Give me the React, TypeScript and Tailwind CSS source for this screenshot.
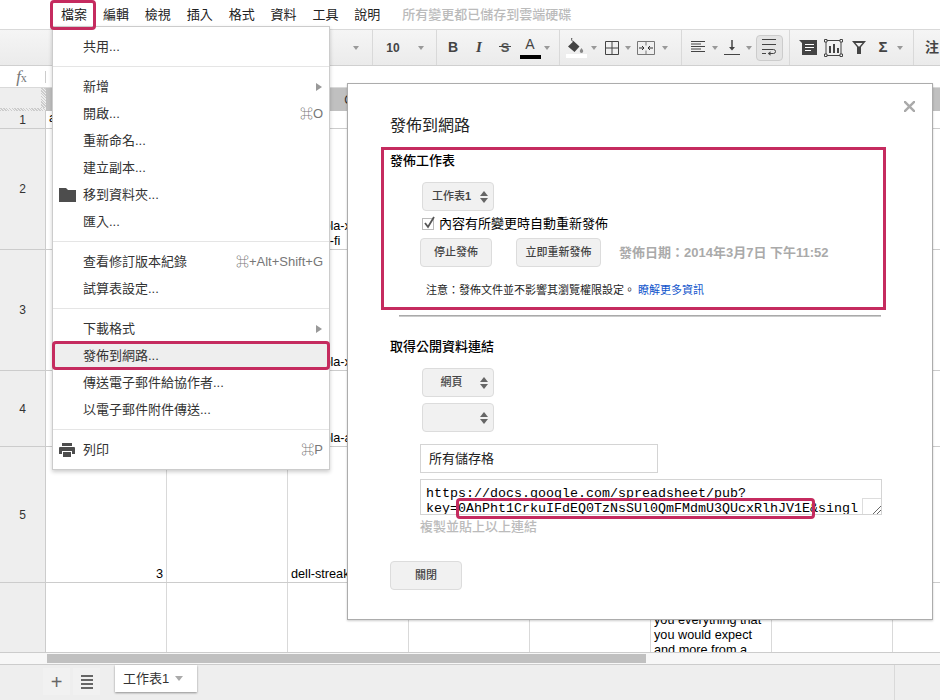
import React from "react";

const MENUS = ["檔案", "編輯", "檢視", "插入", "格式", "資料", "工具", "說明"];

const FileIcon = () => (
  <svg width="18" height="14" viewBox="0 0 18 14"><path d="M0 0h7l2 2h8v12H0z" fill="#4d4d4d" /></svg>
);

const PrintIcon = () => (
  <svg width="16" height="14" viewBox="0 0 16 14" fill="#4d4d4d">
    <path d="M3 0h10v3H3z" />
    <path d="M1 4h14a1 1 0 0 1 1 1v6h-3V8H3v3H0V5a1 1 0 0 1 1-1z" />
    <path d="M4 9h8v5H4z" />
  </svg>
);

const Caret = () => <span className="inline-block border-x-[3.5px] border-t-[4px] border-x-transparent border-t-[#999]" />;

const Tool = ({ w, children }: { w: number; children?: React.ReactNode }) => (
  <div className="flex h-full shrink-0 items-center justify-center" style={{ width: w }}>{children}</div>
);

const Arrow = ({ w = 10 }: { w?: number }) => <Tool w={w}><Caret /></Tool>;

const Group = ({ w, pl, children }: { w: number; pl: number; children: React.ReactNode }) => (
  <div className="flex h-full shrink-0 items-center border-r border-[#d9d9d9]" style={{ width: w, paddingLeft: pl }}>{children}</div>
);

const Toolbar = () => (
  <div className="flex h-[36px] shrink-0 overflow-hidden border-b border-[#d0d0d0] bg-gradient-to-b from-[#f5f5f5] to-[#ebebeb]">
    <div className="flex h-full w-[373px] shrink-0 items-center justify-end border-r border-[#d9d9d9] pr-[13px]"><Caret /></div>
    <Group w={64} pl={0}>
      <span className="w-[40px] text-center text-[12px] font-bold text-[#444]">10</span>
      <span className="ml-[5px] flex"><Caret /></span>
    </Group>
    <Group w={123} pl={3}>
      <Tool w={26}><span className="text-[14px] font-bold text-[#444]">B</span></Tool>
      <Tool w={26}><span className="font-['Liberation_Serif'] text-[15px] font-bold italic text-[#444]">I</span></Tool>
      <Tool w={26}>
        <span className="relative text-[13px] font-bold text-[#555]">
          S
          <span className="absolute -left-[2px] -right-[2px] top-[8px] h-px bg-[#444]" />
        </span>
      </Tool>
      <Tool w={24}>
        <div className="flex flex-col items-center">
          <span className="text-[14px] leading-[16px] text-[#444]">A</span>
          <span className="mt-[3px] h-[4px] w-[21px] bg-black" />
        </div>
      </Tool>
      <Arrow />
    </Group>
    <Group w={122} pl={5}>
      <Tool w={22}>
        <div className="flex flex-col items-center">
          <svg width="18" height="16" viewBox="0 0 18 16" fill="#444">
            <path d="M4 0l1.5.6-.7 1.6L6.500 3 12.500 8.500 7.500 14 1 8.500 6 3.800 4.500 2.800z" />
            <path d="M14.500 10c1 1.500 1.700 2.300 1.700 3.200a1.700 1.700 0 0 1-3.400 0c0-.9.700-1.700 1.700-3.200z" fill="#888" />
          </svg>
          <span className="h-[4px] w-[21px] bg-white" />
        </div>
      </Tool>
      <Arrow w={13} />
      <Tool w={23}>
        <svg width="14" height="14" viewBox="0 0 14 14" fill="none" stroke="#444"><path d="M.5.5h13v13H.5zM7 .5v13M.5 7h13" /></svg>
      </Tool>
      <Arrow />
      <Tool w={26}>
        <svg width="18" height="14" viewBox="0 0 18 14" fill="none" stroke="#777">
          <path d="M.5.5h17v13H.5zM9 .5v4M9 9.5v4" />
          <path d="M2 7h5M5 5l2 2-2 2M16 7h-5M13 5l-2 2 2 2" stroke="#333" />
        </svg>
      </Tool>
      <Arrow w={12} />
    </Group>
    <Group w={108} pl={5}>
      <Tool w={22}>
        <svg width="15" height="13" viewBox="0 0 15 13" stroke="#444"><path d="M0 .5h14M0 3h10M0 5.500h14M0 8h10M0 10.500h14" /></svg>
      </Tool>
      <Arrow w={11} />
      <Tool w={24}>
        <svg width="16" height="15" viewBox="0 0 16 15" fill="#444" stroke="#444"><path d="M8 0v8" strokeWidth="1.5" /><path d="M5 7h6l-3 3.500z" stroke="none" /><path d="M0 14.500h16" /></svg>
      </Tool>
      <Arrow />
      <div className="ml-[2px] flex h-[26px] w-[27px] items-center justify-center rounded-sm border border-[#ccc] bg-[#e4e4e4]">
        <svg width="15" height="17" viewBox="0 0 15 17" fill="none" stroke="#444">
          <path d="M0 .5h14M0 5.500h14M0 10.500h11.500a2 2 0 0 1 0 4H8M0 14.500h4" />
          <path d="M8.500 12.300v4.400L5.800 14.500z" fill="#444" stroke="none" />
        </svg>
      </div>
    </Group>
    <Group w={124} pl={5}>
      <Tool w={25}>
        <svg width="18" height="15" viewBox="0 0 18 15"><path d="M0 0h18v15H3V3z" fill="#444" /><path d="M6 4.500h9M6 7.500h9M6 10.500h6" stroke="#fff" /></svg>
      </Tool>
      <Tool w={26}>
        <svg width="19" height="18" viewBox="0 0 19 18" fill="none" stroke="#444"><path d="M2 1.500h15v15H2z" /><path d="M5 7h2v7H5zM9 5h2v9H9zM13 9h2v5h-2z" fill="#444" stroke="none" /><path d="M.5.5h2.500v2.500H.5zM16 .5h2.500v2.500H16zM.5 15h2.500v2.500H.5zM16 15h2.500v2.500H16z" fill="#fff" /></svg>
      </Tool>
      <Tool w={25}>
        <svg width="14" height="13" viewBox="0 0 14 13" fill="#444"><path d="M0 0h14L9 6v7H5V6zM3.500 2L6.500 5.500h1L10.500 2z" fillRule="evenodd" /></svg>
      </Tool>
      <Tool w={24}><span className="text-[15px] font-bold text-[#444]">Σ</span></Tool>
      <Arrow />
    </Group>
    <div className="flex h-full flex-1 items-center pl-[11px] text-[14px] font-bold text-[#444]">注</div>
  </div>
);

const COL_W = [121, 121, 121, 121, 121, 121, 121, 48];

const Row = ({ h, num, cells = {} }: { h: number; num: string; cells?: Record<number, React.ReactNode> }) => (
  <div className="flex shrink-0 overflow-hidden border-b border-[#ccc]" style={{ height: h }}>
    <div className="flex w-[46px] shrink-0 items-center justify-center border-r border-[#ccc] bg-[#eee] text-[12px] text-[#333]">{num}</div>
    {COL_W.map((w, i) => (
      <div key={i} className="relative shrink-0 overflow-hidden border-r border-[#d9d9d9] text-[12.7px] leading-[15px] text-black" style={{ width: w }}>
        {cells[i]}
      </div>
    ))}
  </div>
);

const Bottom = ({ children }: { children: React.ReactNode }) => (
  <div className="flex h-full flex-col justify-end whitespace-nowrap px-[3px]">{children}</div>
);

const Grid = () => (
  <div className="flex min-h-0 flex-1 flex-col overflow-hidden bg-white">
    <div className="flex h-[23px] shrink-0 bg-[#c0c0c0]">
      <div className="flex w-[46px] shrink-0 flex-col">
        <div className="flex flex-1">
          <div className="flex-1 bg-[#eee]" />
          <div className="w-[5px] bg-[repeating-linear-gradient(45deg,#ccc,#ccc_1px,#eee_1px,#eee_2px)]" />
        </div>
        <div className="h-[3px] bg-[repeating-linear-gradient(45deg,#ccc,#ccc_1px,#eee_1px,#eee_2px)]" />
      </div>
      <div className="w-[242px] shrink-0" />
      <div className="flex w-[121px] shrink-0 items-center justify-center text-[12px] text-[#333]">C</div>
    </div>
    <Row h={18} num="1" cells={{ 0: <div className="px-[3px]">a</div> }} />
    <Row h={121} num="2" cells={{ 2: <Bottom><div>motorola-xoom-</div><div>with-wi-fi</div></Bottom> }} />
    <Row h={121} num="3" cells={{ 2: <Bottom>motorola-xoom</Bottom> }} />
    <Row h={76} num="4" cells={{ 2: <Bottom>motorola-atrix</Bottom> }} />
    <Row h={136} num="5" cells={{ 0: <Bottom><div className="text-right">3</div></Bottom>, 2: <Bottom>dell-streak-7</Bottom> }} />
    <Row h={70} num="" cells={{
      5: (
        <div className="flex h-full flex-col justify-end whitespace-nowrap px-[3px]">
          <div>you everything that</div>
          <div>you would expect</div>
          <div className="-mb-[6px]">and more from a</div>
        </div>
      ),
    }} />
  </div>
);

const Sep = () => <div className="my-[6px] h-px bg-[#e5e5e5]" />;

const Item = ({ label, hint, arrow, icon, active }: { label: string; hint?: string; arrow?: boolean; icon?: React.ReactNode; active?: boolean }) => (
  <div className={`flex h-[27px] items-center pl-[6px] pr-[6px] text-[13px] text-[#333] ${active ? "bg-[#eee]" : ""}`}>
    <div className="flex w-[24px] shrink-0 items-center">{icon}</div>
    <span className="flex-1">{label}</span>
    {hint && <span className="text-[#777]">{hint}</span>}
    {arrow && <span className="mr-[1px] inline-block border-y-[4px] border-l-[6px] border-y-transparent border-l-[#999]" />}
  </div>
);

const FileMenu = () => (
  <div className="absolute left-[52px] top-[26px] w-[278px] border border-[#ccc] bg-white py-[6px] shadow-[0_2px_4px_rgba(0,0,0,0.2)]">
    <Item label="共用..." />
    <Sep />
    <Item label="新增" arrow />
    <Item label="開啟..." hint="⌘O" />
    <Item label="重新命名..." />
    <Item label="建立副本..." />
    <Item label="移到資料夾..." icon={<FileIcon />} />
    <Item label="匯入..." />
    <Sep />
    <Item label="查看修訂版本紀錄" hint="⌘+Alt+Shift+G" />
    <Item label="試算表設定..." />
    <Sep />
    <Item label="下載格式" arrow />
    <Item label="發佈到網路..." active />
    <Item label="傳送電子郵件給協作者..." />
    <Item label="以電子郵件附件傳送..." />
    <Sep />
    <Item label="列印" hint="⌘P" icon={<PrintIcon />} />
  </div>
);

const Select = ({ label, className = "" }: { label?: React.ReactNode; className?: string }) => (
  <div className={`flex h-[29px] w-[72px] items-center justify-between rounded-sm border border-[#dcdcdc] bg-[#f1f1f1] pr-[5px] text-[11px] font-medium text-[#444] ${className}`}>
    <span className="flex-1 text-center">{label}</span>
    <span className="flex flex-col gap-[2px]">
      <span className="border-x-[4px] border-b-[5px] border-x-transparent border-b-[#666]" />
      <span className="border-x-[4px] border-t-[5px] border-x-transparent border-t-[#666]" />
    </span>
  </div>
);

const Button = ({ w, children }: { w: number; children: React.ReactNode }) => (
  <div className="flex h-[29px] items-center justify-center rounded-sm border border-[#dcdcdc] bg-[#f1f1f1] text-[11px] font-medium text-[#444]" style={{ width: w }}>
    {children}
  </div>
);

const Dialog = () => (
  <div className="absolute left-[347px] top-[83px] flex h-[537px] w-[586px] flex-col border border-[#acacac] bg-white pl-[33px] shadow-[0_1px_2px_rgba(0,0,0,0.2)]">
    <svg className="absolute right-[17px] top-[17px]" width="11" height="11" viewBox="0 0 11 11" stroke="#aaa" strokeWidth="2.4"><path d="M0 0l11 11M11 0L0 11" /></svg>
    <h2 className="mt-[32px] pl-[9px] text-[16px] leading-[20px] text-[#222]">發佈到網路</h2>
    <section className="mt-[11px] h-[163px] w-[505px] shrink-0 border-[3px] border-[#c52b5f] pl-[6px]">
      <h3 className="h-[22px] text-[13px] font-medium leading-[22px] text-black">發佈工作表</h3>
      <Select label={<>工作表<b>1</b></>} className="ml-[32px] mt-[10px]" />
      <label className="ml-[32px] mt-[2px] flex h-[22px] items-center text-[13px] text-black">
        <span className="relative mr-[5px] h-[12px] w-[12px] border border-[#bbb] bg-white">
          <svg className="absolute -top-[3px] left-0" width="13" height="14" viewBox="0 0 13 14" fill="none" stroke="#555" strokeWidth="1.8"><path d="M2 7l3 4 6-10" /></svg>
        </span>
        內容有所變更時自動重新發佈
      </label>
      <div className="ml-[30px] mt-[3px] flex items-center">
        <Button w={72}>停止發佈</Button>
        <div className="ml-[24px]"><Button w={85}>立即重新發佈</Button></div>
        <span className="ml-[18px] whitespace-nowrap text-[13px] font-bold text-[#aaa]">發佈日期：2014年3月7日 下午11:52</span>
      </div>
      <p className="ml-[36px] mt-[13px] text-[11px] leading-[20px] text-[#222]">
        注意：發佈文件並不影響其瀏覽權限設定。<span className="ml-[3px] text-[#15c]">瞭解更多資訊</span>
      </p>
    </section>
    <div className="ml-[18px] mt-[5px] h-[2px] w-[482px] shrink-0 bg-gradient-to-b from-[#999] to-[#ddd]" />
    <h3 className="ml-[9px] mt-[19px] h-[22px] text-[13px] font-medium leading-[22px] text-black">取得公開資料連結</h3>
    <Select label="網頁" className="ml-[41px] mt-[10px]" />
    <Select className="ml-[41px] mt-[6px]" />
    <div className="ml-[39px] mt-[12px] flex h-[29px] w-[238px] items-center border border-[#d4d4d4] pl-[8px] text-[13px] text-[#222]">所有儲存格</div>
    <div className="relative ml-[39px] mt-[6px] h-[36px] w-[462px] overflow-hidden border border-[#d4d4d4] pl-[5px] pt-[6px] font-['Liberation_Mono'] text-[13.33px] leading-[15px] text-black">
      <div>https://docs.google.com/spreadsheet/pub?</div>
      <div className="whitespace-nowrap">key=0AhPht1CrkuIFdEQ0TzNsSUl0QmFMdmU3QUcxRlhJV1E&amp;singl</div>
      <div className="absolute bottom-0 right-0 h-[16px] w-[19px] border-l border-t border-[#ddd] bg-white">
        <svg className="absolute bottom-0 right-0" width="9" height="9" viewBox="0 0 9 9" stroke="#666"><path d="M1 9l8-8M5 9l4-4" /></svg>
      </div>
    </div>
    <p className="ml-[39px] mt-[3px] text-[13px] font-medium leading-[18px] text-[#bbb]">複製並貼上以上連結</p>
    <div className="ml-[9px] mt-[25px]"><Button w={72}>關閉</Button></div>
  </div>
);

export default function App() {
  return (
    <div className="relative flex h-[700px] w-[940px] flex-col overflow-hidden bg-white font-['Liberation_Sans','Noto_Sans_CJK_TC',sans-serif]">
      <div className="flex h-[30px] shrink-0 items-center gap-[15.9px] border-b border-[#d9d9d9] bg-white pl-[61px] text-[13px] text-[#222]">
        {MENUS.map((m) => <span key={m}>{m}</span>)}
        <span className="ml-[6px] font-medium text-[#bbb]">所有變更都已儲存到雲端硬碟</span>
      </div>
      <Toolbar />
      <div className="flex h-[22px] shrink-0 items-center border-b border-[#d9d9d9] bg-white">
        <span className="w-[45px] pr-[2px] text-center font-['Liberation_Serif'] text-[17px] italic leading-none text-[#777]">f<span className="not-italic text-[12px]">x</span></span>
        <span className="h-[12px] w-[1px] bg-[#ccc]" />
      </div>
      <Grid />
      <div className="flex h-[13px] shrink-0 items-center border-y border-[#ccc] bg-[#f7f7f7] pl-[47px]">
        <div className="h-[9px] w-[599px] bg-[#c0c0c0]" />
      </div>
      <div className="flex h-[35px] shrink-0 items-start bg-[#eee] pl-[43px]">
        <div className="mt-[3px] flex h-[27px] w-[27px] items-center justify-center bg-[#f1f1f1] text-[20px] leading-none text-[#666]">+</div>
        <div className="ml-[3px] mt-[3px] flex h-[27px] w-[27px] flex-col items-center justify-center gap-[2px] bg-[#f1f1f1]">
          <span className="h-[2px] w-[12px] bg-[#666]" />
          <span className="h-[2px] w-[12px] bg-[#666]" />
          <span className="h-[2px] w-[12px] bg-[#666]" />
          <span className="h-[2px] w-[12px] bg-[#666]" />
        </div>
        <div className="ml-[15px] flex h-[27px] w-[82px] items-center gap-[6px] bg-white pl-[8px] text-[13px] text-[#333] shadow-[0_1px_2px_rgba(0,0,0,0.4)]">
          工作表1<span className="inline-block border-x-[4px] border-t-[5px] border-x-transparent border-t-[#aaa]" />
        </div>
        <div className="ml-auto mr-[45px] h-full w-px bg-[#d9d9d9]" />
      </div>
      <FileMenu />
      <Dialog />
      {/* annotation boxes over the screenshot */}
      <div className="pointer-events-none absolute left-[50px] top-0 h-[30px] w-[46px] rounded-sm border-[3px] border-[#c52b5f]" />
      <div className="pointer-events-none absolute left-[52px] top-[341px] h-[29px] w-[278px] rounded-sm border-[3px] border-[#c52b5f]" />
      <div className="pointer-events-none absolute left-[456px] top-[498px] h-[21px] w-[359px] rounded-sm border-[3px] border-[#c52b5f]" />
    </div>
  );
}
